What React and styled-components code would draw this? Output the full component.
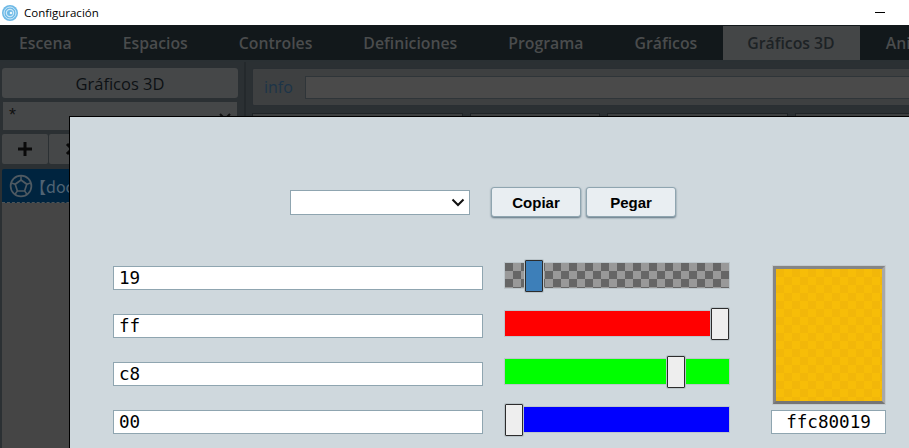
import React from "react";
import styled, { createGlobalStyle } from "styled-components";

const tabs = ["Escena", "Espacios", "Controles", "Definiciones", "Programa", "Gráficos", "Gráficos 3D", "Animaciones"];

const channels = [
  { text: "19", value: 25, track: "alpha", thumb: "#3d7fb9" },
  { text: "ff", value: 255, track: "#ff0000", thumb: "#eeeeee" },
  { text: "c8", value: 200, track: "#00ff00", thumb: "#eeeeee" },
  { text: "00", value: 0, track: "#0000ff", thumb: "#eeeeee" },
];

function App() {
  return (
    <Page>
      <GlobalStyle />

      <TitleBar>
        <TitleLeft>
          <svg width="16" height="16" viewBox="0 0 16 16">
            <circle cx="8" cy="8" r="8" fill="#6db9e6" />
            <circle cx="8" cy="8" r="6" fill="none" stroke="#cfe9f8" strokeWidth="1" />
            <circle cx="8" cy="8" r="3.6" fill="none" stroke="#cfe9f8" strokeWidth="1.2" />
            <circle cx="9" cy="8" r="1.3" fill="#eaf6fc" />
          </svg>
          <TitleText>Configuración</TitleText>
        </TitleLeft>
        <MinimizeMark />
      </TitleBar>

      <TabBar>
        {tabs.map((t) => (
          <Tab key={t} $active={t === "Gráficos 3D"}>{t}</Tab>
        ))}
      </TabBar>

      <Workspace>
        <SideColumn>
          <SideHeader>Gráficos 3D</SideHeader>
          <FilterBox>
            <span>*</span>
            <svg width="12" height="8" viewBox="0 0 12 8">
              <path d="M1 1l5 5 5-5" fill="none" stroke="#111" strokeWidth="2" />
            </svg>
          </FilterBox>
          <ToolRow>
            <ToolButton>
              <svg width="14" height="14" viewBox="0 0 14 14">
                <path d="M7 0v14M0 7h14" stroke="#0a0a0a" strokeWidth="3" />
              </svg>
            </ToolButton>
            <ToolButton>
              <svg width="14" height="14" viewBox="0 0 14 14">
                <path d="M2 2l10 10M12 2L2 12" stroke="#0a0a0a" strokeWidth="3" />
              </svg>
            </ToolButton>
          </ToolRow>
          <ItemRow>
            <svg width="26" height="26" viewBox="0 0 26 26">
              <circle cx="13" cy="13" r="10.4" fill="none" stroke="#4f5a62" strokeWidth="1.7" />
              <path d="M13 7l5.8 4.2-2.2 6.8H9.4L7.2 11.2z" fill="none" stroke="#4f5a62" strokeWidth="1.7" />
              <path d="M13 3v4M22.5 10l-3.7 1.2M19 21.3l-2.4-3.3M7 21.3L9.4 18M3.500 10l3.700 1.200" stroke="#4f5a62" strokeWidth="1.5" />
            </svg>
            <ItemText>【doc</ItemText>
          </ItemRow>
          <ListArea />
        </SideColumn>

        <MainColumn>
          <InfoPanel>
            <InfoLabel>info</InfoLabel>
            <InfoField />
          </InfoPanel>
          <SubPanels>
            <SubPanel $w={211} />
            <SubPanel $w={130} />
            <SubPanel $w={181} />
            <SubPanel $w={130} />
          </SubPanels>
        </MainColumn>
      </Workspace>

      <Modal>
        <TopRow>
          <ModalSelect>
            <svg width="14" height="9" viewBox="0 0 14 9">
              <path d="M1.500 1.500L7 7l5.500-5.500" fill="none" stroke="#111" strokeWidth="2" />
            </svg>
          </ModalSelect>
          <ButtonGroup>
            <ActionButton>Copiar</ActionButton>
            <ActionButton>Pegar</ActionButton>
          </ButtonGroup>
        </TopRow>

        <PickerGrid>
          <Channels>
            {channels.map((c) => (
              <ChannelRow key={c.text}>
                <ValueField>{c.text}</ValueField>
                <SliderTrack $track={c.track}>
                  <SliderThumb $color={c.thumb} style={{ left: `${(c.value / 255) * 206}px` }} />
                </SliderTrack>
              </ChannelRow>
            ))}
          </Channels>
          <PreviewColumn>
            <Swatch />
            <HexField>ffc80019</HexField>
          </PreviewColumn>
        </PickerGrid>
      </Modal>
    </Page>
  );
}

const GlobalStyle = createGlobalStyle`
  html, body {
    margin: 0;
    padding: 0;
    height: 448px;
    overflow: hidden;
    background: #2b3033;
  }
`;

const Page = styled.div`
  position: relative;
  width: 909px;
  height: 448px;
  overflow: hidden;
  font-family: "Open Sans", "Noto Sans", sans-serif;
`;

const TitleBar = styled.div`
  height: 25px;
  background: #ffffff;
  display: flex;
  justify-content: space-between;
  align-items: center;
  padding: 0 24px 0 2px;
`;

const TitleLeft = styled.div`
  display: flex;
  align-items: center;
  gap: 6px;
`;

const TitleText = styled.span`
  font-family: "Open Sans", sans-serif;
  font-size: 11.5px;
  color: #000;
`;

const MinimizeMark = styled.div`
  width: 10px;
  height: 1px;
  background: #000;
`;

const TabBar = styled.div`
  height: 35px;
  background: #12181b;
  display: flex;
  gap: 1px;
  margin-left: -6px;
`;

const Tab = styled.div`
  flex: none;
  padding: ${(p) => (p.$active ? "0 25px 0 24px" : "0 25px")};
  margin-top: 1px;
  display: flex;
  align-items: center;
  font-size: 15.8px;
  font-weight: 600;
  color: ${(p) => (p.$active ? "#1d2225" : "#4a4c4d")};
  background: ${(p) => (p.$active ? "#444647" : "transparent")};
`;

const Workspace = styled.div`
  display: flex;
  height: 388px;
  border-top: 2px solid #2a3033;
`;

const SideColumn = styled.div`
  width: 240px;
  padding: 6px 2px 0 2px;
  flex: none;
  border-right: 2px solid #24292c;
  display: flex;
  flex-direction: column;
`;

const SideHeader = styled.div`
  height: 30px;
  width: 236px;
  background: #454748;
  border-radius: 3px;
  display: flex;
  align-items: center;
  justify-content: center;
  font-size: 16.5px;
  color: #0d1114;
`;

const FilterBox = styled.div`
  height: 28px;
  width: 234px;
  margin: 4px 0 0 1px;
  background: #454748;
  display: flex;
  justify-content: space-between;
  padding: 3px 6px 0 6px;
  box-sizing: border-box;
  font-family: "Liberation Sans", sans-serif;
  font-size: 18px;
  color: #111;
  svg {
    margin-top: 8px;
  }
`;

const ToolRow = styled.div`
  display: flex;
  gap: 1px;
  margin-top: 4px;
`;

const ToolButton = styled.div`
  width: 46px;
  height: 30px;
  background: #454748;
  border-radius: 2px;
  display: flex;
  align-items: center;
  justify-content: center;
`;

const ItemRow = styled.div`
  height: 34px;
  margin-top: 5px;
  width: 236px;
  background: #00243f;
  border-bottom: 1px dashed #4a5358;
  border-radius: 2px 2px 0 0;
  display: flex;
  align-items: center;
  padding-left: 6px;
  box-sizing: border-box;
`;

const ItemText = styled.span`
  font-size: 16px;
  margin-left: -4px;
  color: #4f6373;
  font-family: "Noto Sans CJK SC", "Open Sans", sans-serif;
`;

const ListArea = styled.div`
  flex: 1;
  width: 236px;
  background: #454545;
`;

const MainColumn = styled.div`
  flex: 1;
  padding: 6px 0 0 6px;
  min-width: 0;
`;

const InfoPanel = styled.div`
  height: 38px;
  box-sizing: border-box;
  background: #3e4041;
  border: 1px solid #2a2f33;
  border-radius: 2px;
  display: flex;
  align-items: center;
  padding-left: 11px;
  gap: 12px;
  margin-right: -4px;
`;

const InfoLabel = styled.span`
  font-size: 16px;
  color: #1c3448;
`;

const InfoField = styled.div`
  flex: 1;
  height: 23px;
  box-sizing: border-box;
  background: #4a4a4a;
  border: 1px solid #2f3539;
`;

const SubPanels = styled.div`
  display: flex;
  gap: 7px;
  margin-top: 7px;
`;

const SubPanel = styled.div`
  width: ${(p) => p.$w}px;
  height: 40px;
  background: #3e4041;
  border: 1px solid #1f2427;
  box-sizing: border-box;
  flex: none;
`;

const Modal = styled.div`
  position: absolute;
  left: 69px;
  top: 116px;
  width: 900px;
  height: 340px;
  box-sizing: border-box;
  background: #cfd8dd;
  border: 1px solid #000;
  padding: 70px 0 0 43px;
`;

const TopRow = styled.div`
  display: flex;
  align-items: center;
  margin-left: 177px;
  gap: 21px;
`;

const ModalSelect = styled.div`
  width: 180px;
  height: 25px;
  box-sizing: border-box;
  background: #fff;
  border: 1px solid #8fa5b0;
  display: flex;
  align-items: center;
  justify-content: flex-end;
  padding-right: 4px;
`;

const ButtonGroup = styled.div`
  display: flex;
  gap: 5px;
`;

const ActionButton = styled.div`
  width: 90px;
  height: 30px;
  box-sizing: border-box;
  background: #e9eef2;
  border: 1px solid #8fa5b0;
  border-radius: 3px;
  box-shadow: 0 1px 2px #5d7180;
  display: flex;
  align-items: center;
  justify-content: center;
  font-family: "Liberation Sans", sans-serif;
  font-weight: 700;
  font-size: 15px;
  color: #000;
`;

const PickerGrid = styled.div`
  display: flex;
  margin-top: 49px;
  gap: 42px;
`;

const Channels = styled.div`
  display: flex;
  flex-direction: column;
  gap: 24px;
`;

const ChannelRow = styled.div`
  display: flex;
  gap: 22px;
  align-items: flex-start;
`;

const ValueField = styled.div`
  width: 370px;
  height: 24px;
  box-sizing: border-box;
  background: #fff;
  border: 1px solid #8fa5b0;
  padding-left: 5px;
  font-family: "DejaVu Sans Mono", monospace;
  font-size: 17.6px;
  line-height: 22px;
  color: #000;
`;

const SliderTrack = styled.div`
  position: relative;
  width: 224px;
  height: 25px;
  margin-top: -3px;
  box-shadow: 0 0 0 1px #bcc6cb;
  background-color: ${(p) => (p.$track === "alpha" ? "#999999" : p.$track)};
  background-image: ${(p) =>
    p.$track === "alpha"
      ? "conic-gradient(#999999 25%, #666666 0 50%, #999999 0 75%, #666666 0)"
      : "none"};
  background-size: 16px 16px;
`;

const SliderThumb = styled.div`
  position: absolute;
  top: -3px;
  width: 18px;
  height: 32px;
  box-sizing: border-box;
  background: ${(p) => p.$color};
  border: 1px solid #2c2c2c;
  box-shadow: 0 0 0 1px #b9c3c8;
  border-radius: 1px;
`;

const PreviewColumn = styled.div`
  display: flex;
  flex-direction: column;
  gap: 6px;
`;

const Swatch = styled.div`
  width: 112px;
  height: 138px;
  margin-left: 2px;
  box-sizing: border-box;
  border: 3px solid;
  border-color: #858585 #a8a8a8 #757575 #858585;
  box-shadow: 0 0 0 1px #c4cacd;
  background-color: #f7bd08;
  background-image: conic-gradient(#f7bd08 25%, #f2b709 0 50%, #f7bd08 0 75%, #f2b709 0);
  background-size: 16px 16px;
`;

const HexField = styled.div`
  width: 115px;
  height: 24px;
  box-sizing: border-box;
  background: #fff;
  border: 1px solid #8fa5b0;
  text-align: center;
  font-family: "DejaVu Sans Mono", monospace;
  font-size: 17.6px;
  line-height: 22px;
  color: #000;
`;

export default App;
